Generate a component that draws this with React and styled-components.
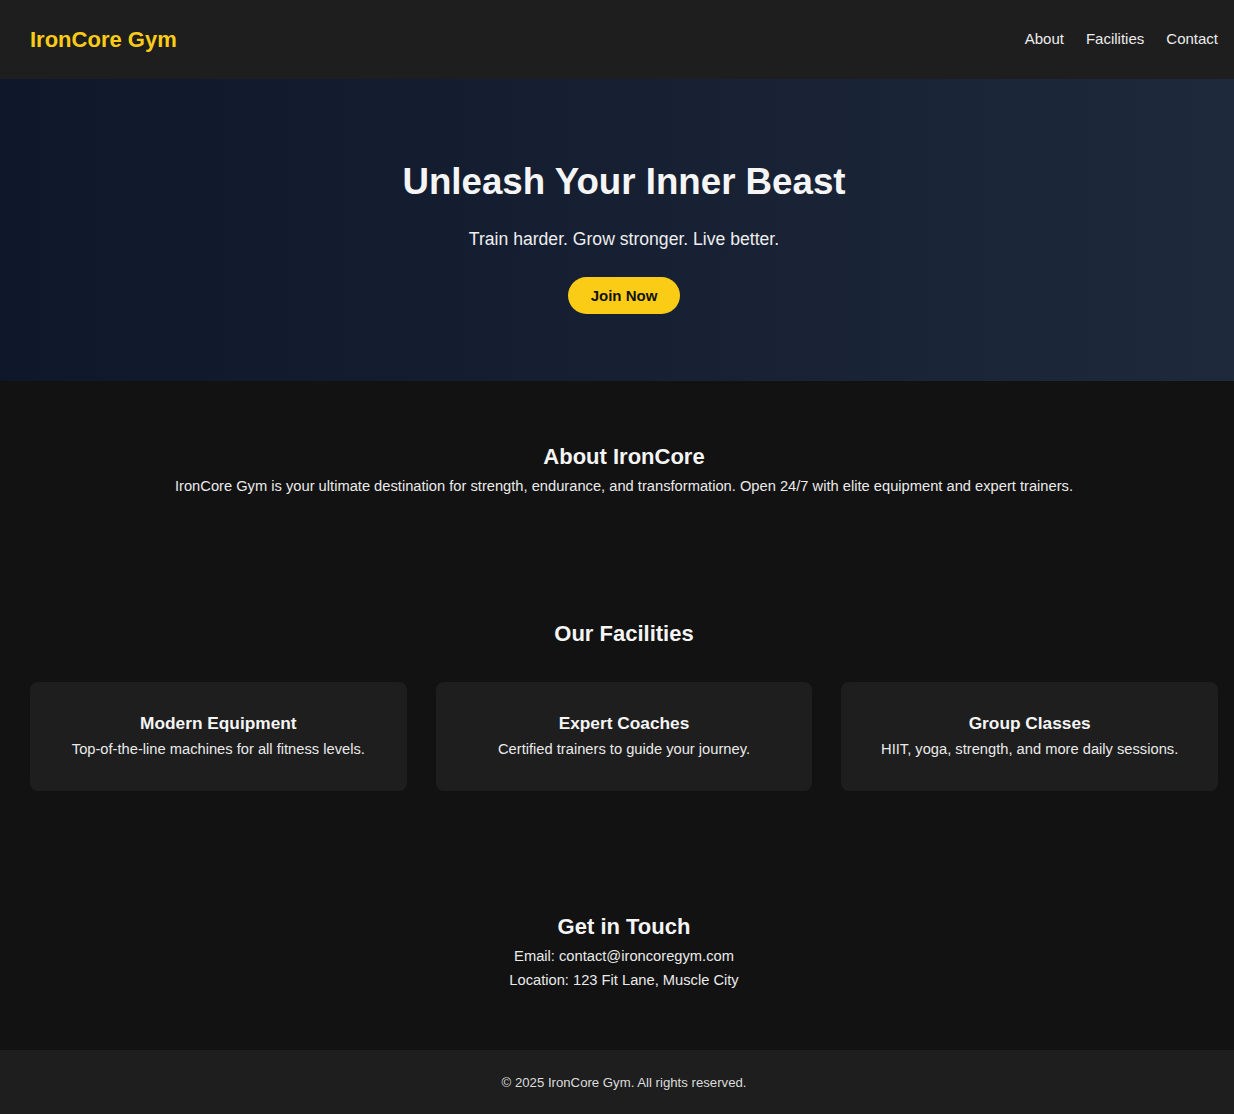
import React from 'react'
import styled, { createGlobalStyle } from 'styled-components'

const GlobalStyle = createGlobalStyle`
    * { box-sizing: border-box; }
    html, body {
        overflow-x: hidden;
    }
    body {
        margin: 0;
        background: #121212;
        color: #f2f2f2;
        font-family: "Liberation Sans", Arial, sans-serif;
    }
`;

// the page is a little wider than the window, so its centre sits at 624
const Page = styled.div`
    width: 1248px;
`;

const Header = styled.header`
    height: 79px;
    background: #1e1e1e;
    display: flex;
    justify-content: space-between;
    align-items: center;
    padding: 0 30px;
`;

const Logo = styled.div`
    color: #facc15;
    font-size: 22px;
    font-weight: 700;
`;

const Nav = styled.nav`
    display: flex;
    gap: 22px;
    margin-top: -2px;

    a {
        color: #ececec;
        text-decoration: none;
        font-size: 15px;
    }
`;

const Hero = styled.section`
    background: linear-gradient(90deg, #0f172a 0%, #1e293b 100%);
    text-align: center;
    padding: 82px 20px 67px;

    h1 {
        margin: 0 0 25px;
        font-size: 36.7px;
        line-height: 42px;
        font-weight: 700;
        color: #f5f5f5;
    }

    p {
        margin: 0 0 27px;
        font-size: 17.6px;
        line-height: 22px;
        color: #eeeeee;
    }
`;

const JoinButton = styled.button`
    background: #facc15;
    color: #111;
    border: none;
    border-radius: 999px;
    height: 37px;
    padding: 0 22.5px;
    font-family: inherit;
    font-size: 15px;
    font-weight: 700;
    cursor: pointer;
`;

const Section = styled.section`
    text-align: center;
    padding: ${p => p.pad || '62px 30px'};
`;

const Title = styled.h2`
    margin: 0 0 ${p => p.gap || 6}px;
    font-size: 22px;
    line-height: 28px;
    font-weight: 700;
    color: #f5f5f5;
`;

const Text = styled.p`
    margin: 0;
    font-size: 14.7px;
    line-height: ${p => p.lh || 19}px;
    color: #eaeaea;
`;

const Grid = styled.div`
    display: grid;
    grid-template-columns: repeat(3, 1fr);
    gap: 29px;
    text-align: center;
`;

const Card = styled.div`
    background: #1e1e1e;
    border-radius: 8px;
    padding: 30px 20px 32px;

    h3 {
        margin: 0 0 6px;
        font-size: 17.3px;
        line-height: 22px;
        font-weight: 700;
        color: #f5f5f5;
    }
`;

const Footer = styled.footer`
    background: #1e1e1e;
    height: 64px;
    display: flex;
    justify-content: center;
    align-items: center;
    font-size: 13.2px;
    color: #dddddd;
`;

const facilities = [
    { title: 'Modern Equipment', text: 'Top-of-the-line machines for all fitness levels.' },
    { title: 'Expert Coaches', text: 'Certified trainers to guide your journey.' },
    { title: 'Group Classes', text: 'HIIT, yoga, strength, and more daily sessions.' },
]

export default function App() {
    return (
        <Page>
            <GlobalStyle />
            <Header>
                <Logo>IronCore Gym</Logo>
                <Nav>
                    <a href="#about">About</a>
                    <a href="#facilities">Facilities</a>
                    <a href="#contact">Contact</a>
                </Nav>
            </Header>

            <Hero>
                <h1>Unleash Your Inner Beast</h1>
                <p>Train harder. Grow stronger. Live better.</p>
                <JoinButton>Join Now</JoinButton>
            </Hero>

            <Section id="about">
                <Title>About IronCore</Title>
                <Text>
                    IronCore Gym is your ultimate destination for strength, endurance, and transformation. Open 24/7 with elite equipment and expert trainers.
                </Text>
            </Section>

            <Section id="facilities">
                <Title gap={34}>Our Facilities</Title>
                <Grid>
                    {facilities.map(f => (
                        <Card key={f.title}>
                            <h3>{f.title}</h3>
                            <Text>{f.text}</Text>
                        </Card>
                    ))}
                </Grid>
            </Section>

            <Section id="contact" pad="60px 30px 58px">
                <Title gap={3}>Get in Touch</Title>
                <Text lh={24}>Email: contact@ironcoregym.com</Text>
                <Text lh={24}>Location: 123 Fit Lane, Muscle City</Text>
            </Section>

            <Footer>© 2025 IronCore Gym. All rights reserved.</Footer>
        </Page>
    )
}
